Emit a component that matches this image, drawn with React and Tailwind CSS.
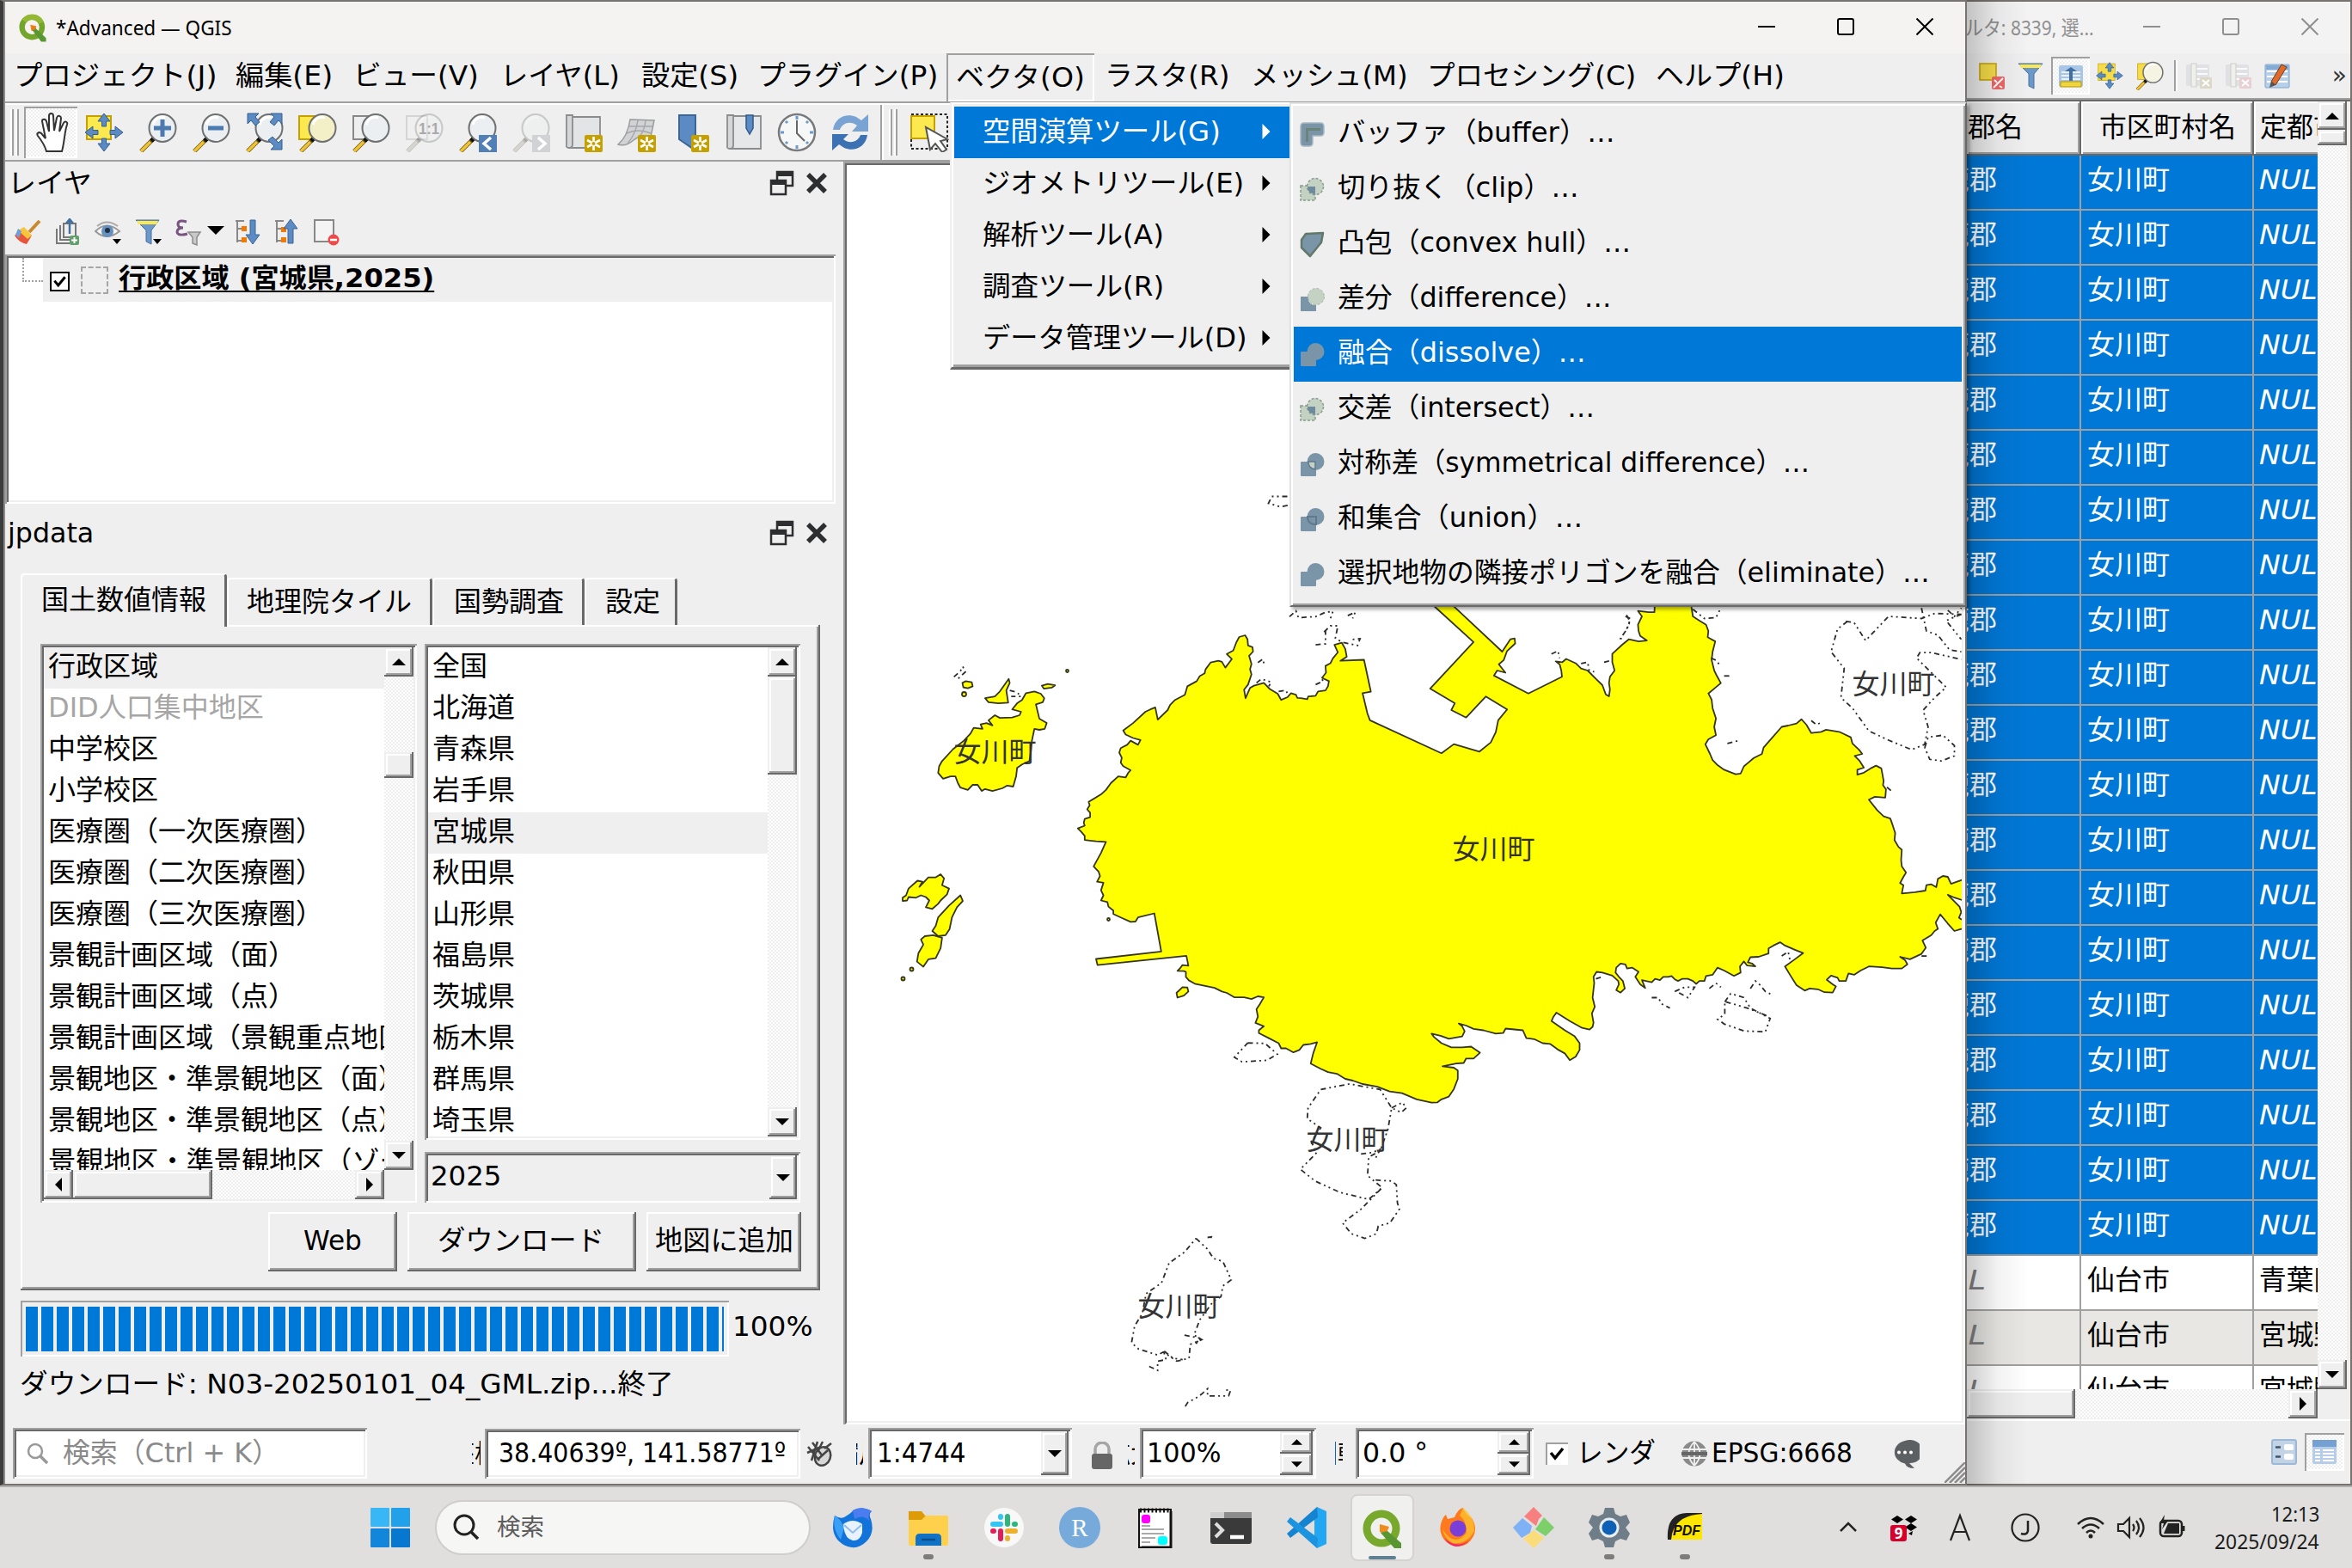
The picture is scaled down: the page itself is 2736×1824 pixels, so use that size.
import React, { useLayoutEffect, useRef, useState } from "react";

/* ---------- shared bevel styles ---------- */
const raised =
  "bg-[#efefef] shadow-[inset_-2px_-2px_0_#696969,inset_2px_2px_0_#ffffff,inset_-4px_-4px_0_#a0a0a0]";
const raisedScroll =
  "bg-[#efefef] shadow-[inset_-2px_-2px_0_#696969,inset_2px_2px_0_#efefef,inset_-4px_-4px_0_#a0a0a0,inset_4px_4px_0_#ffffff]";
const sunken =
  "p-[4px] shadow-[inset_2px_2px_0_#a0a0a0,inset_-2px_-2px_0_#ffffff,inset_4px_4px_0_#696969,inset_-4px_-4px_0_#efefef]";
const thinSunken = "shadow-[inset_2px_2px_0_#a0a0a0,inset_-2px_-2px_0_#ffffff]";
const dither =
  "bg-[repeating-conic-gradient(#ffffff_0%_25%,#efefef_0%_50%)] bg-[length:4px_4px]";

/* Text condensed or widened to a given width. */
function T({ w, children, className = "" }) {
  const ref = useRef(null);
  const [scale, setScale] = useState(1);
  useLayoutEffect(() => {
    if (w && ref.current) setScale(w / ref.current.offsetWidth);
  }, [w]);
  return (
    <div className={"shrink-0 " + className} style={w ? { width: w } : undefined}>
      <div
        ref={ref}
        className="w-max origin-left whitespace-nowrap"
        style={{ transform: `scaleX(${scale})` }}
      >
        {children}
      </div>
    </div>
  );
}

function Tri({ dir, size = 12, color = "#000" }) {
  const d = {
    up: "M0 9 6 3 12 9Z",
    down: "M0 3 12 3 6 9Z",
    left: "M9 0 9 12 3 6Z",
    right: "M3 0 9 6 3 12Z",
  }[dir];
  return (
    <svg width={size} height={size} viewBox="0 0 12 12" className="block">
      <path d={d} fill={color} />
    </svg>
  );
}

function ScrollBtn({ dir, className }) {
  return (
    <div className={"flex shrink-0 items-center justify-center " + raisedScroll + " " + className}>
      <Tri dir={dir} size={16} />
    </div>
  );
}

/* ---------- toolbar icons ---------- */
function Svg({ s = 46, box = 46, children, className = "" }) {
  return (
    <svg width={s} height={s} viewBox={`0 0 ${box} ${box}`} className={"block shrink-0 " + className} fill="none">
      {children}
    </svg>
  );
}

function Lens({ fill = "#eceff1", faded }) {
  return (
    <g opacity={faded ? 0.3 : 1}>
      <path d="M19 30 4 45" stroke="#6b5a1a" strokeWidth="5" />
      <path d="M15 34 4 45" stroke={faded ? "#999" : "#f2c230"} strokeWidth="3.4" />
      <path d="M21 28 16 33" stroke="#111" strokeWidth="5" />
      <ellipse cx="29" cy="18" rx="15.5" ry="16" fill={fill} stroke="#6e7072" strokeWidth="2" />
      <path d="M18 14c2-7 8-10 14-8" stroke="#fff" strokeWidth="3" />
    </g>
  );
}

function MoveArrows() {
  return (
    <g fill="#5b8bc2" stroke="#33608f" strokeWidth="1">
      <path d="M23 1 30 10H25.500V16H20.500V10H16Z" />
      <path d="M23 45 30 36H25.500V30H20.500V36H16Z" />
      <path d="M1 23 10 16V20.500H16V25.500H10V30Z" />
      <path d="M45 23 36 16V20.500H30V25.500H36V30Z" />
    </g>
  );
}

function GoldStar() {
  return (
    <g>
      <rect x="24" y="26" width="21" height="20" rx="2" fill="#c4a000" />
      <path d="M34.500 28V44M27 32 42 40M42 32 27 40" stroke="#fff" strokeWidth="2.600" />
      <circle cx="34.500" cy="36" r="2" fill="#c4a000" />
    </g>
  );
}

const toolbarIcons = {
  hand: (
    <path
      transform="translate(4,0)"
      d="M14 45C12 38 8 32 4 27c-2-3 1-5 4-3l5 6L9 10c0-3 4-3 5 0l3 12L17 4c0-4 5-4 5 0l1 17L26 6c1-3 5-3 5 1l-2 15 5-10c2-3 5-1 4 2-3 8-3 21-6 31Z"
      fill="#fff"
      stroke="#333"
      strokeWidth="2"
    />
  ),
  pan: (
    <g>
      <rect x="3" y="4" width="28" height="27" fill="#fce94f" stroke="#c4a000" strokeWidth="2" />
      <MoveArrows />
    </g>
  ),
  zin: (
    <g>
      <Lens />
      <path d="M29 8V28M19 18H39" stroke="#4a7ab0" strokeWidth="5" />
    </g>
  ),
  zout: (
    <g>
      <Lens />
      <path d="M20 18H38" stroke="#4a7ab0" strokeWidth="5" />
    </g>
  ),
  full: (
    <g>
      <Lens />
      <g fill="#5b8bc2" stroke="#33608f">
        <path d="M4 1H17L13 5 18 11 13 15 8 9 4 13Z" />
        <path d="M44 1H31L35 5 30 11 35 15 40 9 44 13Z" />
        <path d="M44 43H31L35 39 28 32 33 28 40 35 44 31Z" />
      </g>
    </g>
  ),
  zsel: (
    <g>
      <rect x="2" y="4" width="24" height="27" fill="#fce94f" stroke="#c4a000" strokeWidth="2" />
      <Lens fill="#f3efc6" />
    </g>
  ),
  zlay: (
    <g>
      <rect x="3" y="4" width="24" height="27" fill="#eee" stroke="#888" strokeWidth="2" />
      <Lens />
    </g>
  ),
  znat: (
    <g>
      <g opacity=".5">
        <rect x="3" y="4" width="24" height="27" stroke="#bbb" strokeWidth="2" />
      </g>
      <Lens faded />
      <text x="29" y="25" fontSize="18" textAnchor="middle" fill="#aaa" fontWeight="bold" fontFamily="Liberation Sans, sans-serif" textLength="24" lengthAdjust="spacingAndGlyphs">
        1:1
      </text>
    </g>
  ),
  zprev: (
    <g>
      <Lens />
      <rect x="25" y="26" width="21" height="20" fill="#5080b5" />
      <path d="M39 29 31 36 39 43" stroke="#fff" strokeWidth="3.500" />
    </g>
  ),
  znext: (
    <g>
      <Lens faded />
      <rect x="25" y="26" width="21" height="20" fill="#d0d2d4" />
      <path d="M32 29 40 36 32 43" stroke="#fff" strokeWidth="3.500" />
    </g>
  ),
  newmap: (
    <g>
      <path d="M10 5H42V41H6" fill="#e3e4e5" stroke="#8a8c8e" strokeWidth="1.800" />
      <path d="M3 3h7v34q0 4-4 4t-3-4Z" fill="#d4d6d8" stroke="#8a8c8e" strokeWidth="1.800" />
      <GoldStar />
    </g>
  ),
  new3d: (
    <g>
      <path d="M15 8 43 9 38 33Q28 24 19 32 10 40 1 37 12 28 15 8Z" fill="#d2d3d4" stroke="#9a9c9e" strokeWidth="1.500" />
      <path d="M24 9Q22 24 12 36M33 9Q32 20 26 28M14 16H41M11 24Q24 18 39 24" stroke="#a5a7a9" strokeWidth="1.500" />
      <GoldStar />
    </g>
  ),
  bmnew: (
    <g>
      <path d="M10 3H29V44L10 31Z" fill="#5b8bc2" stroke="#3a6598" strokeWidth="2" />
      <GoldStar />
    </g>
  ),
  bms: (
    <g>
      <path d="M11 4H43V42H7" fill="#e6e7e8" stroke="#8a8c8e" strokeWidth="1.800" />
      <path d="M4 3h7v35q0 4-4 4t-3-4Z" fill="#d4d6d8" stroke="#8a8c8e" strokeWidth="1.800" />
      <path d="M26 3H34V18L30 25 26 18Z" fill="#5b8bc2" stroke="#2f5b8c" strokeWidth="1.500" />
    </g>
  ),
  clock: (
    <g>
      <circle cx="23" cy="23" r="21" fill="#f6f7f7" stroke="#77797b" strokeWidth="2.500" />
      <g stroke="#6a9bd0" strokeWidth="3">
        <path d="M23 4V8M23 38V42M4 23H8M38 23H42M10 10l2 2M36 10l-2 2M10 36l2-2M36 36l-2-2" />
      </g>
      <path d="M23 9V24L32 33" stroke="#666" strokeWidth="2" />
    </g>
  ),
  refresh: (
    <g fill="#4f83c0">
      <path d="M3 20C5 6 18 0 30 5L36 9 44 2V22H25L31 15C23 9 14 12 11 20Z" fill="#79a3d3" />
      <path d="M43 26C41 40 28 46 16 41L10 37 2 44V25H21L15 31C23 37 32 34 35 26Z" fill="#3c72b3" />
    </g>
  ),
};
const toolbarOrder = [
  "hand", "pan", "zin", "zout", "full", "zsel", "zlay", "znat",
  "zprev", "znext", "newmap", "new3d", "bmnew", "bms", "clock", "refresh",
];

function QLogo({ s }) {
  return (
    <Svg s={s} box={48}>
      <circle cx="23" cy="22" r="16.500" stroke="#74a52b" strokeWidth="9" />
      <path d="M10 12A16.500 16.500 0 0 1 38 15" stroke="#93b831" strokeWidth="9" />
      <path d="M20 18 30 20 28 29 22 28Z" fill="#f08c1e" />
      <path d="M22 25 29 24 46 40V46H38Z" fill="#589632" />
      <path d="M23 19 29 22 27 27 22 26Z" fill="#ee7913" />
    </Svg>
  );
}

/* ---------- main window: title, menu bar, toolbar ---------- */
function WinButtons({ color, gap, className }) {
  return (
    <div className={"flex items-center " + gap + " " + className}>
      <svg width="20" height="20" viewBox="0 0 20 20" fill="none" stroke={color} strokeWidth="2"><path d="M0 10H20" /></svg>
      <svg width="20" height="20" viewBox="0 0 20 20" fill="none" stroke={color} strokeWidth="2"><rect x="1" y="1" width="18" height="18" rx="2" /></svg>
      <svg width="20" height="20" viewBox="0 0 20 20" fill="none" stroke={color} strokeWidth="2"><path d="M.5.5 19.500 19.500M19.500.5.5 19.500" /></svg>
    </div>
  );
}

const menus = [
  ["プロジェクト(J)", 10, 236],
  ["編集(E)", 22, 113],
  ["ビュー(V)", 24, 146],
  ["レイヤ(L)", 25, 139],
  ["設定(S)", 25, 113],
  ["プラグイン(P)", 22, 210],
  ["ベクタ(O)", 10, 172, true],
  ["ラスタ(R)", 12, 146],
  ["メッシュ(M)", 24, 183],
  ["プロセシング(C)", 22, 243],
  ["ヘルプ(H)", 23, 150],
];

function MenuBar() {
  return (
    <div className="flex h-[56px] items-center">
      {menus.map(([t, gap, w, open]) =>
        open ? (
          <div
            key={t}
            style={{ marginLeft: gap, width: w }}
            className={"flex h-[56px] shrink-0 items-center justify-center pb-1 pt-1 " + thinSunken}
          >
            <T w={150}>{t}</T>
          </div>
        ) : (
          <div key={t} style={{ marginLeft: gap }} className="shrink-0 pb-[4px]">
            <T w={w}>{t}</T>
          </div>
        )
      )}
    </div>
  );
}

function Grip() {
  return (
    <div className="flex h-[54px] gap-[2px]">
      <div className="w-[4px] border-r-2 border-[#a0a0a0] bg-white" />
      <div className="w-[4px] border-r-2 border-[#a0a0a0] bg-white" />
    </div>
  );
}

function ToolBar() {
  return (
    <div className="flex h-[70px] items-center border-b-2 border-t-2 border-b-[#a0a0a0] border-t-[#a0a0a0] pt-[2px] shadow-[inset_0_2px_0_#fff]">
      <div className="ml-[6px] mr-[6px]"><Grip /></div>
      {toolbarOrder.map((k) => (
        <div
          key={k}
          className={
            "flex h-[60px] w-[62px] shrink-0 items-center justify-center " +
            (k === "hand" ? dither + " " + thinSunken : "")
          }
        >
          <Svg s={46}>{toolbarIcons[k]}</Svg>
        </div>
      ))}
      <div className="ml-[4px] h-full w-[4px] border-l-2 border-[#a0a0a0] bg-white" />
      <div className="ml-[6px] mr-[14px]"><Grip /></div>
      <Svg s={46}>
        <rect x="2" y="2" width="42" height="40" stroke="#222" strokeWidth="2" strokeDasharray="3 2.500" />
        <rect x="2" y="4" width="27" height="26" fill="#fce94f" stroke="#c4a000" strokeWidth="2" />
        <path d="M19 17 24 43 30 36 38 46 43 43 36 33 44 31Z" fill="#fff" stroke="#555" strokeWidth="2" />
      </Svg>
    </div>
  );
}

/* ---------- docks ---------- */
function DockTitle({ title, w, className }) {
  return (
    <div className={"flex items-center " + className}>
      <T w={w} className="ml-[3px]">{title}</T>
      <div className="ml-auto mr-[18px] flex items-center gap-[12px]">
        <Svg s={30} box={30}>
          <rect x="9" y="2" width="18" height="16" stroke="#2c2e30" strokeWidth="2.500" />
          <rect x="9" y="1" width="19" height="6" fill="#2c2e30" />
          <rect x="2" y="12" width="17" height="16" fill="#efefef" stroke="#2c2e30" strokeWidth="2.500" />
          <rect x="1" y="11" width="19" height="6" fill="#2c2e30" />
        </Svg>
        <Svg s={26} box={26}>
          <path d="M3 3 23 23M23 3 3 23" stroke="#2c2e30" strokeWidth="5.500" />
        </Svg>
      </div>
    </div>
  );
}

const layerIcons = [
  <g key="a">
    <path d="M30 3 18 16" stroke="#c98a2b" strokeWidth="4" />
    <path d="M10 12 21 20 15 30Q6 28 1 20Z" fill="#e8563a" />
    <path d="M5 14 12 10 21 20 16 24Z" fill="#f6c43d" />
    <path d="M2 19 5 12 9 15 6 23Z" fill="#6aa0dc" />
  </g>,
  <g key="b">
    <path d="M3 12V29H18M7 8V25H20" stroke="#777" strokeWidth="2" />
    <rect x="11" y="6" width="14" height="16" fill="#eee" stroke="#777" strokeWidth="2" />
    <path d="M18 1V18M14 6 18 1 22 6" stroke="#44709f" strokeWidth="2.500" />
    <rect x="18" y="20" width="11" height="11" rx="2" fill="#5f9f6a" />
    <path d="M23.500 22V29M20 25.500H27" stroke="#fff" strokeWidth="2" />
  </g>,
  <g key="c">
    <path d="M1 15Q14 2 29 15 14 27 1 15Z" fill="#f4f4f4" stroke="#999" strokeWidth="2" />
    <circle cx="15" cy="15" r="7" fill="#6690bd" />
    <circle cx="15" cy="14" r="3" fill="#1d2f42" />
    <path d="M3 9Q14 0 27 9" stroke="#aaa" strokeWidth="2" />
    <path d="M21 24H31L26 30Z" fill="#000" />
  </g>,
  <g key="d">
    <path d="M1 2H28L19 14V30L13 27V14Z" fill="#6b97c9" stroke="#49739f" />
    <path d="M2 3H27L25 7H4Z" fill="#fce94f" />
    <path d="M21 24H31L26 30Z" fill="#000" />
  </g>,
];

function LayerTools() {
  return (
    <div className="flex h-[58px] items-center pl-[10px] pt-[5px]">
      {layerIcons.map((ic, i) => (
        <div key={i} className="mr-[15px]"><Svg s={32} box={32}>{ic}</Svg></div>
      ))}
      <Svg s={32} box={32}>
        <path d="M13 4Q3 1 3 7 3 11 9 11 2 11 2 16 3 21 14 18" stroke="#7a5480" strokeWidth="3" />
        <path d="M15 16H29L25 22V31L20 29V22Z" fill="#c9c9c9" stroke="#8d8d8d" strokeWidth="1.500" />
      </Svg>
      <div className="mx-[5px] mb-1"><Tri dir="down" size={20} /></div>
      <div className="ml-[6px]">
        <Svg s={32} box={32}>
          <path d="M2 3H12M4 3V28M4 12H10M4 26H10" stroke="#888" strokeWidth="2" />
          <rect x="9" y="9" width="6" height="6" fill="#f57900" />
          <rect x="9" y="22" width="6" height="6" fill="#f57900" />
          <path d="M19 2H25V19H30L22 30 14 19H19Z" fill="#5b8bc2" stroke="#3a6598" />
        </Svg>
      </div>
      <div className="ml-[14px]">
        <Svg s={32} box={32}>
          <path d="M2 3H12M4 3V28M4 12H10M4 26H10" stroke="#888" strokeWidth="2" />
          <rect x="9" y="10" width="6" height="6" fill="#f57900" />
          <rect x="9" y="22" width="6" height="6" fill="#f57900" />
          <path d="M17 29H23V12H28L20 1 12 12H17Z" fill="#5b8bc2" stroke="#3a6598" />
        </Svg>
      </div>
      <div className="ml-[14px]">
        <Svg s={32} box={32}>
          <rect x="2" y="2" width="22" height="25" fill="#f4f4f4" stroke="#888" strokeWidth="2" />
          <circle cx="24" cy="25" r="6.500" fill="#ef4a4a" />
          <path d="M20 25H28" stroke="#fff" strokeWidth="2.500" />
        </Svg>
      </div>
    </div>
  );
}

function Check({ className = "" }) {
  return (
    <svg width="24" height="24" viewBox="0 0 24 24" fill="none" className={"block shrink-0 " + className}>
      <path d="M5 11 10 17 19 6" stroke="#000" strokeWidth="3.500" />
    </svg>
  );
}

function LayerTree() {
  return (
    <div className={"h-[290px] w-[966px] bg-white " + sunken}>
      <div className="flex h-[51px]">
        <div className="ml-[16px] h-[28px] w-[24px] shrink-0 border-b-2 border-l-2 border-dotted border-[#a0a0a0]" />
        <div className="flex flex-1 items-center bg-[#efefef] pl-[8px]">
          <div className="mt-[4px] border-2 border-black bg-white"><Check className="-m-[1px] size-[21px]" /></div>
          <div className="ml-[13px] h-[32px] w-[32px] border-2 border-dashed border-[#a5a5a5]" />
          <T w={367} className="mb-[4px] ml-[12px] text-[31px] font-bold underline decoration-2 underline-offset-4">
            行政区域 (宮城県,2025)
          </T>
        </div>
      </div>
    </div>
  );
}

const tabs = [
  ["国土数値情報", 192, "h-[62px] w-[240px] pl-[22px] pb-[2px] mb-[-2px] bg-[#efefef] relative"],
  ["地理院タイル", 192, "h-[55px] w-[239px] pl-[21px] pb-[2px]"],
  ["国勢調査", 128, "h-[55px] w-[177px] pl-[23px] pb-[2px]"],
  ["設定", 64, "h-[55px] w-[108px] pl-[22px] pb-[2px]"],
];

const datasets = [
  ["行政区域", 128],
  ["DID人口集中地区", 251],
  ["中学校区", 128],
  ["小学校区", 128],
  ["医療圏（一次医療圏）", 320],
  ["医療圏（二次医療圏）", 320],
  ["医療圏（三次医療圏）", 320],
  ["景観計画区域（面）", 288],
  ["景観計画区域（点）", 288],
  ["景観計画区域（景観重点地区）", 448],
  ["景観地区・準景観地区（面）", 416],
  ["景観地区・準景観地区（点）", 416],
  ["景観地区・準景観地区（ゾーン）", 480],
];
const prefectures = ["全国", "北海道", "青森県", "岩手県", "宮城県", "秋田県", "山形県", "福島県", "茨城県", "栃木県", "群馬県", "埼玉県"];

function DataLists() {
  return (
    <div className="ml-[23px] flex h-[650px] gap-[9px]">
      <div className={"flex w-[438px] flex-col bg-white " + sunken}>
        <div className="flex h-[608px]">
          <div className="w-[396px] overflow-hidden">
            {datasets.map(([t, w], i) => (
              <div
                key={t}
                className={
                  "flex h-[48px] items-center pb-[5px] pl-[5px] " +
                  (i === 0 ? "bg-[#efefef]" : i === 1 ? "text-[#a6a6a6]" : "")
                }
              >
                <T w={w}>{t}</T>
              </div>
            ))}
          </div>
          <div className={"flex w-[34px] flex-col " + dither}>
            <ScrollBtn dir="up" className="h-[34px]" />
            <div className={"mt-[88px] h-[30px] " + raisedScroll} />
            <ScrollBtn dir="down" className="mt-auto h-[34px]" />
          </div>
        </div>
        <div className="flex h-[34px] bg-[#efefef]">
          <div className={"flex w-[396px] " + dither}>
            <ScrollBtn dir="left" className="w-[34px]" />
            <div className={"w-[162px] " + raisedScroll} />
            <ScrollBtn dir="right" className="ml-auto w-[34px]" />
          </div>
        </div>
      </div>
      <div className="flex w-[437px] flex-col gap-[14px]">
        <div className={"flex h-[577px] bg-white " + sunken}>
          <div className="w-[395px] overflow-hidden">
            {prefectures.map((t) => (
              <div key={t} className={"flex h-[48px] items-center pb-[5px] pl-[5px] " + (t === "宮城県" ? "bg-[#efefef]" : "")}>
                <T w={t.length * 32}>{t}</T>
              </div>
            ))}
          </div>
          <div className={"flex w-[34px] flex-col " + dither}>
            <ScrollBtn dir="up" className="h-[34px]" />
            <div className={"h-[114px] " + raisedScroll} />
            <ScrollBtn dir="down" className="mt-auto h-[34px]" />
          </div>
        </div>
        <div className={"flex h-[59px] items-center " + sunken}>
          <T w={82} className="mb-[4px] ml-[3px]">2025</T>
          <ScrollBtn dir="down" className="ml-auto h-[51px] w-[32px]" />
        </div>
      </div>
    </div>
  );
}

function JpData() {
  return (
    <div>
      <div className="ml-[18px] mt-[11px] flex items-end">
        {tabs.map(([t, w, c]) => (
          <div key={t} className={"flex items-center rounded-t-[4px] border-l-2 border-r-[3px] border-t-2 border-l-white border-r-[#696969] border-t-white " + c}>
            <T w={w}>{t}</T>
          </div>
        ))}
      </div>
      <div className="ml-[18px] h-[774px] w-[930px] pt-[22px] shadow-[inset_-2px_-2px_0_#696969,inset_2px_2px_0_#fff,inset_-4px_-4px_0_#a0a0a0]">
        <DataLists />
        <div className="ml-[288px] mt-[11px] flex h-[69px] gap-[12px]">
          <div className={"flex w-[150px] items-center justify-center pb-1 " + raised}><T w={68}>Web</T></div>
          <div className={"flex w-[266px] items-center justify-center pb-1 pr-[2px] " + raised}><T w={194}>ダウンロード</T></div>
          <div className={"flex w-[180px] items-center justify-center pb-1 " + raised}><T w={161}>地図に追加</T></div>
        </div>
      </div>
      <div className="ml-[18px] mt-[12px] flex h-[65px] items-center">
        <div className={"flex h-[65px] w-[824px] items-center gap-[4px] overflow-hidden pl-[6px] pr-[6px] " + thinSunken}>
          {Array.from({ length: 45 }, (_, i) => (
            <div key={i} className="h-[52px] w-[14px] shrink-0 bg-[#0078d7]" />
          ))}
          <div className="h-[52px] w-[2px] shrink-0 bg-[#0078d7]" />
        </div>
        <T w={93} className="mb-[5px] ml-[4px]">100%</T>
      </div>
      <T w={761} className="ml-[17px] mt-[16px]">ダウンロード: N03-20250101_04_GML.zip...終了</T>
    </div>
  );
}

/* ---------- map ---------- */
/* Survey sheets: origin x, origin y, units per step in x and y. */
const sheets = {
  a: [1000, 700, 0.574, 0.3954],
  b: [1700, 560, 0.38265, 0.4847],
  c: [1240, 1100, 0.4464, 0.35714],
};
function pts(sheet, s) {
  const [ox, oy, sx, sy] = sheets[sheet];
  return s
    .split(" ")
    .map((p) => {
      const [x, y] = p.split(",").map(Number);
      return (ox + x * sx).toFixed(1) + "," + (oy + y * sy).toFixed(1);
    })
    .join(" ");
}

const mainland = [
  pts("a", "1162,10 1245,120 1157,257 1207,300 1200,320 1230,342 1270,280 1313,318 1295,350 1290,385 1280,415 1257,442 1205,420 1180,447 1035,350 1030,330 1020,270 1037,266 1023,172 975,175 988,163 985,140 978,122 963,128 970,150 960,168 955,182 945,190 946,210 938,225 952,235 950,250 945,262 930,265 925,278 910,280 908,288 895,285 888,284 885,275 875,270 868,282 855,290 848,272 840,265 832,258 820,240 800,248 792,255 783,285 780,260 788,245 795,215 792,200 795,185 790,160 798,148 797,135 788,130 787,112 782,100 770,105 764,122 758,145 745,155 755,170 742,195 735,178 728,175 712,180 702,200 700,212 690,220 684,235 665,250 660,275 640,290 630,305 625,320 605,348 600,312 590,318 580,325 555,358 535,380 540,392 555,402 570,408 565,422 550,410 543,422 530,432 527,445 532,460 530,475 535,485 550,497 545,505 540,518 525,515 510,535 500,555 490,568 465,590 467,600 462,612 468,622 468,635 457,640 455,652 457,660 443,668 450,678 457,690 457,702 480,706 500,708 490,740 475,780 485,795 488,808 482,825 495,828 490,850 495,865 490,880 503,885 505,898 515,910 515,920 530,930 550,943 560,942 565,930 598,918 612,1030 480,1052 483,1070 663,1043 667,1072 655,1070 650,1080 645,1087 658,1088 662,1090 662,1105 668,1115 680,1125 720,1137 735,1148 745,1152 760,1165 780,1165 795,1170 808,1162 820,1165 812,1185 805,1200 808,1222 803,1240 820,1250 810,1262 810,1270 830,1285 850,1300 855,1315 865,1315 880,1327 892,1320 900,1305 915,1302 928,1297 920,1330 915,1360 935,1375 950,1385 968,1390 985,1405 1000,1410 1020,1420 1050,1428 1075,1442 1100,1447 1130,1465 1160,1475 1172,1474 1180,1465 1195,1457 1205,1435 1213,1405 1213,1380 1205,1372 1182,1368 1210,1360 1225,1358 1230,1345 1245,1345 1258,1328 1240,1310 1222,1312 1200,1312 1180,1300 1165,1282 1160,1272 1178,1278 1195,1287 1222,1280 1227,1265 1222,1250 1215,1242 1230,1248 1245,1258 1265,1262 1290,1272 1305,1270 1310,1257 1345,1262 1352,1285 1368,1288 1385,1300 1400,1302 1415,1318 1430,1330 1440,1350 1452,1340 1460,1320 1460,1300 1450,1280 1430,1262 1403,1235 1407,1222 1413,1210 1440,1235 1465,1255 1480,1260"),
  pts("b", "400,1310 403,1300 398,1278 407,1262 400,1240 405,1205 403,1190 412,1178 430,1180 460,1187 478,1200 480,1208 472,1222 485,1228 498,1218 492,1200 480,1190 470,1180 472,1168 485,1158 500,1160 505,1170 520,1168 540,1178 530,1190 545,1208 560,1217 550,1198 580,1203 590,1195 605,1198 615,1190 630,1190 640,1188 650,1196 660,1200 672,1195 690,1195 705,1200 715,1207 725,1200 740,1200 745,1188 765,1185 780,1168 800,1175 830,1188 850,1180 848,1165 860,1153 870,1163 895,1165 885,1158 872,1155 880,1143 905,1142 935,1134 935,1122 950,1115 970,1107 985,1115 1000,1120 1015,1125 1040,1133 1015,1148 985,1165 1000,1185 1020,1210 1045,1223 1060,1218 1085,1220 1105,1227 1130,1228 1140,1213 1130,1208 1112,1197 1125,1187 1145,1192 1150,1200 1170,1200 1178,1182 1195,1185 1215,1175 1240,1165 1280,1167 1310,1170 1340,1170 1357,1160 1350,1150 1335,1142 1365,1148 1400,1135 1413,1120 1403,1103 1430,1090 1440,1080 1450,1075 1443,1060 1457,1040 1480,1062 1500,1080 1521,1075 1540,1078 1540,1050 1521,1052 1514,1048 1521,1035 1516,1022 1480,993 1500,1000 1540,1010 1540,955 1521,958 1490,967 1480,950 1465,948 1450,955 1445,975 1430,968 1415,970 1412,983 1380,987 1340,990 1345,970 1335,965 1345,950 1353,940 1340,925 1338,910 1340,885 1330,878 1318,862 1320,845 1312,825 1305,810 1285,805 1265,790 1240,765 1258,758 1290,760 1292,740 1283,730 1285,720 1278,690 1262,683 1245,690 1225,700 1205,705 1205,693 1225,688 1212,672 1197,660 1220,655 1210,645 1190,630 1185,615 1150,602 1110,597 1095,602 1065,605 1050,585 1035,572 1020,582 995,587 975,590 945,617 920,640 915,655 890,665 860,685 850,702 835,704 800,693 780,682 765,670 757,655 743,632 752,620 775,610 770,590 775,570 765,545 762,525 752,510 775,495 790,485 778,468 770,455 762,430 765,410 773,385 750,375 752,360 745,345 725,335 705,325 700,300 700,285 590,285 588,315 570,315 538,312 550,325 538,345 540,360 545,372 565,383 540,385 510,380 490,393 460,415 460,435 467,455 453,470 450,485 453,500 450,517 440,512 430,490 410,475 385,455 365,450 350,438 320,427 308,435 288,433 300,440 305,455 307,470 205,510 100,467 110,455 135,460 115,440 130,430 140,408 165,390 163,378 150,380 125,410"),
  pts("a", "1303,148 1205,15 1200,10"),
].join(" ");

const islets = [
  pts("a", "355,265 368,272 375,285 372,297 358,303 365,345 380,358 376,375 365,378 355,375 350,410 348,440 345,470 330,480 320,490 318,515 312,545 300,542 290,550 270,558 255,552 248,558 240,540 230,540 220,555 205,548 200,535 195,515 185,515 170,522 160,505 162,485 168,470 190,435 212,410 225,390 232,372 250,375 246,362 258,358 270,365 262,350 275,335 285,343 310,342 325,335 328,325 310,318 320,300 330,290 338,270"),
  pts("a", "255,285 275,280 285,265 303,228 305,240 298,262 302,298 282,300 262,297"),
  pts("a", "165,803 172,815 168,835 182,845 178,862 165,880 160,890 148,905 135,900 142,880 135,870 125,865 115,872 100,870 97,880 88,882 88,872 95,865 100,845 118,822 128,825 122,840 140,812 155,812"),
  pts("a", "205,865 210,882 198,900 188,930 183,965 175,982 160,985 148,970 155,955 160,930 182,895"),
  pts("a", "133,985 150,982 168,990 165,1020 155,1050 140,1053 130,1075 117,1060 120,1035 130,1010 125,995"),
  pts("a", "655,1135 665,1136 667,1148 658,1160 645,1166 643,1152"),
  pts("a", "209,240 216,235 228,238 230,250 220,256 211,253"),
  pts("a", "370,248 382,243 397,247 390,254 374,257"),
];

const reefs = [
  pts("c", "665,470 740,452 820,470 850,530 840,600 820,670 790,690 787,750 825,790 790,828 715,805 650,768 612,730 655,675 640,640 665,595 630,565 632,530 665,470"),
  pts("c", "808,765 850,768 862,780 865,840 870,860 845,905 815,915 810,940 780,955 745,940 722,905 770,860 825,790"),
  pts("c", "850,530 878,512 888,530 875,545 850,530"),
  pts("c", "340,955 370,990 385,1020 410,1030 432,1090 410,1110 405,1145 385,1160 350,1220 335,1270 355,1285 325,1300 322,1345 290,1355 255,1325 240,1335 190,1315 172,1295 180,1240 200,1200 210,1135 250,1100 270,1035 310,1000 340,955"),
  pts("c", "218,1372 240,1385 240,1355 262,1350 255,1320 280,1345 305,1350"),
  pts("c", "310,1270 330,1275 350,1280 340,1298 355,1275"),
  pts("c", "312,1502 318,1490 340,1475 355,1462 370,1445 370,1468 385,1468 425,1468 430,1450 410,1448"),
  pts("c", "475,318 520,320 552,355 525,375 460,380 440,365 475,318"),
  pts("c", "770,680 800,675 820,665 805,700"),
  pts("c", "370,952 380,950 378,958"),
  pts("b", "1170,337 1195,340 1230,383 1300,325 1400,330 1440,318 1521,320"),
  pts("b", "1175,337 1145,355 1125,410 1165,450 1155,520 1190,545 1240,600 1300,622 1370,645 1410,632 1420,590 1405,550 1440,520 1475,495 1430,460 1385,425 1395,412 1430,412 1521,428"),
  pts("b", "1400,305 1415,360 1450,370 1485,405 1521,410"),
  pts("b", "1410,640 1420,615 1465,610 1500,635 1500,660 1460,672 1425,668 1410,640"),
  pts("b", "1521,320 1475,335 1500,360 1521,380"),
  pts("b", "1480,310 1500,325 1521,305"),
  pts("b", "705,308 740,330 775,328 790,305"),
  pts("b", "500,325 515,330 505,355 485,378 495,380"),
  pts("b", "275,415 295,408 300,425"),
  pts("b", "365,438 385,435 390,455 405,458"),
  pts("b", "435,435 460,430"),
  pts("b", "760,425 775,430 785,440"),
  pts("b", "800,468 820,468"),
  pts("b", "810,630 850,622"),
  pts("b", "1065,575 1080,585 1100,578"),
  pts("b", "1295,735 1315,748"),
  pts("b", "802,1250 820,1230 860,1240 880,1265 940,1290 925,1322 860,1320 800,1303 780,1292 802,1280 802,1250"),
  pts("b", "805,1250 870,1265 935,1285"),
  pts("b", "580,1240 600,1240 610,1255 635,1265"),
  pts("b", "650,1225 680,1215 710,1215 690,1240 655,1225"),
  pts("b", "755,1218 775,1205 790,1215"),
  pts("b", "880,1218 895,1200 910,1210 925,1225 950,1235"),
  pts("b", "975,1140 995,1130 1000,1150"),
  pts("b", "410,1195 430,1190"),
  pts("b", "1400,1140 1420,1140"),
  pts("a", "872,45 885,28 890,48 925,45 945,32 960,30 955,50"),
  pts("a", "990,42 1005,32 1000,50"),
  pts("a", "942,90 955,72 970,72 965,108 978,120 1010,130 1015,110 1000,112"),
  pts("a", "925,128 945,125 945,85"),
  pts("a", "805,240 815,228 835,238 830,250"),
  pts("a", "850,265 865,262 870,280"),
  pts("a", "925,245 940,235 935,220"),
  pts("a", "808,180 818,170 820,182"),
  pts("a", "192,222 205,205 210,192 215,208 200,228"),
  pts("a", "305,262 320,268 328,280 308,280"),
  pts("a", "1555,40 1562,60 1555,82"),
];
const dots = [[1242, 781, 1.5], [1122, 808, 2.5], [1061, 1128, 2], [1051, 1139, 2], [1290, 1070, 1.5]];
const labels = [[1158, 874], [1738, 987], [2203, 795], [1568, 1325], [1372, 1519]];

function MapCanvas() {
  return (
    <div className="h-[1470px] w-[1305px] border-l-2 border-t-[3px] border-[#a0a0a0]">
      <div className="h-full border-b-2 border-l-2 border-r-2 border-t-2 border-b-white border-l-[#696969] border-r-white border-t-[#696969]">
        <div className="h-full border-b-2 border-r-2 border-[#efefef] bg-white">
          <svg className="block h-full w-full" viewBox="985.5 192.5 1297 1461" preserveAspectRatio="xMinYMin slice">
            <g fill="#ffff00" stroke="#35351c" strokeWidth="1.800" strokeLinejoin="round">
              <polygon points={mainland} />
              {islets.map((p, i) => <polygon key={i} points={p} />)}
              {dots.map(([x, y, r], i) => <circle key={i} cx={x} cy={y} r={r} />)}
            </g>
            <g fill="none" stroke="#2b2b2b" strokeWidth="1.800" strokeDasharray="6 4 2 4 2 4">
              {reefs.map((p, i) => <polyline key={i} points={p} />)}
              <polyline points="1498,578 1480,578 1476,586 1490,590 1500,588" />
            </g>
            <g fill="#333" fontSize="32" textAnchor="middle" fontFamily="'Noto Sans CJK JP', sans-serif">
              {labels.map(([x, y], i) => <text key={i} x={x} y={y + 12}>女川町</text>)}
            </g>
          </svg>
        </div>
      </div>
    </div>
  );
}

/* ---------- status bar ---------- */
function Spin({ value, w, className }) {
  return (
    <div className={"flex h-[59px] shrink-0 items-center bg-white " + sunken + " " + className}>
      <T w={w} className="mb-[2px] ml-[4px]">{value}</T>
      <div className="ml-auto flex h-full w-[38px] flex-col">
        <div className={"flex flex-1 items-center justify-center " + raisedScroll}><Tri dir="up" size={13} /></div>
        <div className={"flex flex-1 items-center justify-center " + raisedScroll}><Tri dir="down" size={13} /></div>
      </div>
    </div>
  );
}

/* A label squeezed so narrow that only the gap between its glyphs shows. */
function Sliver({ children, className }) {
  return (
    <div className={"h-[30px] shrink-0 overflow-hidden whitespace-nowrap text-[30px] leading-[30px] " + className}>
      <div className="-ml-[27px]">{children}</div>
    </div>
  );
}

function StatusBar() {
  return (
    <div className="flex h-[70px] items-center pb-[1px]">
      <div className={"ml-[9px] flex h-[59px] w-[412px] shrink-0 items-center bg-white text-[#8a8a8a] " + sunken}>
        <Svg s={26} box={26} className="ml-[12px]">
          <circle cx="10" cy="10" r="8" stroke="#999" strokeWidth="2.500" />
          <path d="M16 16 24 24" stroke="#999" strokeWidth="3.500" />
        </Svg>
        <T w={252} className="mb-[2px] ml-[16px]">検索（Ctrl + K）</T>
      </div>
      <Sliver className="ml-[122px] w-[10px]">座標</Sliver>
      <div className={"ml-[5px] flex h-[58px] w-[367px] shrink-0 items-center bg-white " + sunken}>
        <T w={334} className="mb-[2px] ml-[12px]">38.40639º, 141.58771º</T>
      </div>
      <Svg s={32} box={32} className="ml-[6px]">
        <g stroke="#444" strokeWidth="2.500">
          <ellipse cx="20" cy="19" rx="9" ry="11" fill="#d8d8d8" transform="rotate(20 20 19)" />
          <path d="M3 8 16 24M8 3 20 19M14 2 7 24M2 15 18 8M20 2 14 14M15 22 26 12M30 4 22 10" />
        </g>
      </Svg>
      <Sliver className="ml-[27px] w-[8px]">縮尺</Sliver>
      <div className={"ml-[6px] flex h-[59px] w-[237px] shrink-0 items-center bg-white " + sunken}>
        <T w={104} className="mb-[2px] ml-[6px]">1:4744</T>
        <ScrollBtn dir="down" className="ml-auto h-full w-[32px]" />
      </div>
      <Svg s={32} box={32} className="ml-[19px] mt-1">
        <path d="M8 16V9a8 8 0 0 1 16 0v7" stroke="#a5a5a5" strokeWidth="3.500" />
        <rect x="4" y="14" width="24" height="18" rx="3" fill="#666" />
      </Svg>
      <Sliver className="ml-[14px] w-[8px]">拡大</Sliver>
      <Spin value="100%" w={86} className="ml-[6px] w-[205px]" />
      <Sliver className="ml-[22px] w-[9px]">回転</Sliver>
      <Spin value="0.0 °" w={76} className="ml-[15px] w-[207px]" />
      <div className={"ml-[14px] h-[26px] w-[26px] shrink-0 bg-white " + thinSunken}><Check className="m-[1px]" /></div>
      <T w={92} className="mb-[2px] ml-[10px]">レンダ</T>
      <Svg s={32} box={32} className="ml-[29px]">
        <circle cx="16" cy="16" r="14.500" fill="#8a8a8a" />
        <path d="M16 2V30M2 11H30M2 21H30M16 2Q3 16 16 30M16 2Q29 16 16 30" stroke="#efefef" strokeWidth="1.800" />
        <path d="M1 16H31" stroke="#666" strokeWidth="4" />
      </Svg>
      <T w={164} className="mb-[2px] ml-[4px]">EPSG:6668</T>
      <Svg s={34} box={34} className="ml-[44px]">
        <path d="M17 2a15 13.500 0 1 1 5 26l6 6q-9 0-11-5.500A15 13.500 0 0 1 17 2Z" fill="#5d6062" />
        <g fill="#fff"><circle cx="10" cy="15.500" r="2" /><circle cx="17" cy="15.500" r="2" /><circle cx="24" cy="15.500" r="2" /></g>
      </Svg>
      <Svg s={24} box={24} className="ml-auto mt-auto">
        <path d="M0 24 24 0M6 24 24 6M12 24 24 12M18 24 24 18" stroke="#8d8d8d" strokeWidth="2.500" />
      </Svg>
    </div>
  );
}

/* ---------- vector menus ---------- */
const vectorMenu = [
  ["空間演算ツール(G)", 277],
  ["ジオメトリツール(E)", 304],
  ["解析ツール(A)", 211],
  ["調査ツール(R)", 211],
  ["データ管理ツール(D)", 308],
];

const B = "#7b95a8";
const G = "#c3d2c3";
const geoIcons = {
  buffer: (
    <g>
      <path d="M6 2H25Q29 2 29 6V13Q29 17 25 17H16V25Q16 29 12 29H6Q2 29 2 25V6Q2 2 6 2Z" fill="#7b95a8" stroke="#a9b8c4" strokeWidth="1.500" />
      <path d="M8 8H25V11H11V24H8Z" fill="#6c8377" />
    </g>
  ),
  clip: (
    <g strokeDasharray="3 2" stroke="#8a9b8a" strokeWidth="1.500">
      <rect x="2" y="11" width="17" height="17" fill={G} />
      <circle cx="19" cy="12" r="9.500" fill={G} />
      <path d="M10 12H19V21Q10 20 10 12Z" fill="#6d8a9f" stroke="none" />
    </g>
  ),
  hull: <path d="M8 3 28 2 26 13 13 29 3 19 3 10Z" fill="#7b95a8" stroke="#61786a" strokeWidth="2.500" strokeLinejoin="round" />,
  diff: (
    <g>
      <path d="M2 12H11Q10 22 20 22V29H2Z" fill={B} />
      <circle cx="20" cy="12" r="9.500" fill={G} stroke="#a5b5a5" strokeDasharray="3 2" />
    </g>
  ),
  dissolve: (
    <g fill={B}>
      <rect x="2" y="12" width="18" height="17" rx="1" />
      <circle cx="19.500" cy="12" r="10" />
    </g>
  ),
  sym: (
    <g fill={B}>
      <rect x="2" y="12" width="18" height="17" rx="1" />
      <circle cx="19.500" cy="12" r="10" />
      <path d="M11 12H19V21Q11 20 11 12Z" fill={G} stroke="#60798c" strokeWidth="1.500" />
    </g>
  ),
  union: (
    <g fill={B}>
      <rect x="2" y="12" width="18" height="17" rx="1" />
      <circle cx="19.500" cy="12" r="10" />
      <path d="M10 12H20V21Q10 21 10 12Z" stroke="#60798c" strokeWidth="2" />
    </g>
  ),
};
const geoMenu = [
  ["バッファ（buffer）…", 323, "buffer"],
  ["切り抜く（clip）…", 281, "clip"],
  ["凸包（convex hull）…", 341, "hull"],
  ["差分（difference）…", 319, "diff"],
  ["融合（dissolve）…", 289, "dissolve", true],
  ["交差（intersect）…", 299, "clip"],
  ["対称差（symmetrical difference）…", 549, "sym"],
  ["和集合（union）…", 285, "union"],
  ["選択地物の隣接ポリゴンを融合（eliminate）…", 689, "dissolve"],
];

function Menus() {
  return (
    <div className="absolute left-[1105px] top-[119px] flex items-start">
      <div className="h-[311px] w-[395px] border-b-[3px] border-l-2 border-b-[#696969] border-l-[#efefef] bg-[#efefef] pl-[3px] pt-[5px] shadow-[inset_2px_2px_0_#fff,inset_0_-3px_0_#a0a0a0]">
        {vectorMenu.map(([t, w], i) => (
          <div key={t} className={"flex h-[60px] items-center pb-[3px] pl-[33px] pr-[18px] " + (i === 0 ? "bg-[#0078d7] text-white" : "")}>
            <T w={w}>{t}</T>
            <div className="ml-auto"><Tri dir="right" size={18} color={i === 0 ? "#fff" : "#000"} /></div>
          </div>
        ))}
      </div>
      <div className="h-[587px] w-[788px] border-2 border-b-[#696969] border-l-[#e3e3e3] border-r-[#696969] border-t-[#e3e3e3] bg-[#efefef] pl-[3px] pr-[4px] pt-[3px] shadow-[inset_2px_2px_0_#fff,inset_-2px_-2px_0_#a0a0a0,3px_3px_4px_rgba(0,0,0,0.35)]">
        {geoMenu.map(([t, w, icon, on]) => (
          <div key={t} className={"flex h-[64px] items-center pl-[6px] " + (on ? "bg-[#0078d7] text-white" : "")}>
            <Svg s={31} box={31}>{geoIcons[icon]}</Svg>
            <T w={w} className="mb-[5px] ml-[14px]">{t}</T>
          </div>
        ))}
      </div>
    </div>
  );
}

function MainWindow() {
  return (
    <div className="h-[1730px] w-[2288px] shrink-0 border-b-[2px] border-b-[#b0b0b0]">
      <div className="relative h-[1728px] border-b-2 border-l-[4px] border-r-2 border-t-2 border-b-[#767370] border-l-[#3c3c3c] border-r-[#767370] border-t-[#767370] bg-[#efefef]">
        <div className="border-l-2 border-[#8c8c8c]">
          <div className="flex h-[60px] items-center bg-[#f4f3f1] pl-[15px] pt-[1px]">
            <QLogo s={34} />
            <T w={205} className="mb-[1px] ml-[10px] font-['Noto_Sans','Noto_Sans_CJK_JP',sans-serif] text-[24px]">*Advanced — QGIS</T>
            <WinButtons color="#000" gap="gap-[72px]" className="mb-[4px] ml-auto mr-[37px]" />
          </div>
          <MenuBar />
          <ToolBar />
          <div className="-mt-[1px] flex h-[1469px]">
            <div className="w-[975px]">
              <DockTitle title="レイヤ" w={98} className="h-[51px]" />
              <LayerTools />
              <LayerTree />
              <DockTitle title="jpdata" w={100} className="h-[70px] pb-[2px]" />
              <JpData />
            </div>
            <MapCanvas />
          </div>
          <StatusBar />
        </div>
      </div>
    </div>
  );
}

/* ---------- attribute table window ---------- */
function TableRow({ left, city, ward, wardW, tone, leftClass, wardClass, h = "h-[64px]" }) {
  return (
    <div className={"flex overflow-hidden border-b-2 border-[#a0a0a0] " + h + " " + tone}>
      <div className="flex h-[62px] w-[133px] shrink-0 items-center overflow-hidden border-r-2 border-[#a0a0a0] pb-[6px]">
        <T w={96} className={leftClass}>{left}</T>
      </div>
      <div className="flex h-[62px] w-[201px] shrink-0 items-center border-r-2 border-[#a0a0a0] pb-[6px] pl-[7px]">
        <T w={96}>{city}</T>
      </div>
      <div className={"flex h-[62px] w-[74px] items-center overflow-hidden pb-[6px] pl-[6px] " + (wardClass || "")}>
        <T w={wardW}>{ward}</T>
      </div>
    </div>
  );
}

const headerCell = "flex h-[63px] items-center pb-[3px] shadow-[inset_-2px_-2px_0_#696969,inset_2px_2px_0_#fff,inset_-4px_-4px_0_#a0a0a0]";

function TableTools() {
  return (
    <div className="flex h-[52px] items-center pb-[1px] pl-[13px]">
      <Svg s={32} box={32}>
        <rect x="2" y="2" width="19" height="19" fill="#f5dc48" stroke="#c4a000" strokeWidth="1.500" />
        <rect x="16" y="17" width="15" height="15" rx="2" fill="#e66" />
        <path d="M18 30 29 19M19 21l3 3M25 28l3 2" stroke="#fff" strokeWidth="2" />
      </Svg>
      <Svg s={32} box={32} className="ml-[13px]">
        <path d="M2 2H30L20 14V31L14 28V14Z" fill="#6b97c9" stroke="#49739f" />
        <path d="M3 3H29L27 7H5Z" fill="#fce94f" />
      </Svg>
      <div className={"ml-[8px] flex h-[44px] w-[45px] items-center justify-center " + dither + " " + thinSunken}>
        <Svg s={30} box={30}>
          <rect x="1" y="3" width="28" height="25" rx="2" fill="#a9c6e6" />
          <path d="M4 11H26M4 15H26M4 19H26" stroke="#fff" strokeWidth="1.500" />
          <rect x="3" y="22" width="24" height="6" fill="#f0d53c" stroke="#b59500" />
          <path d="M15 5 22 10H17V21H13V10H8Z" fill="#3f6fa5" />
        </Svg>
      </div>
      <Svg s={32} className="ml-[7px]">
        <rect x="4" y="3" width="28" height="28" fill="#f5dc48" stroke="#c4a000" />
        <MoveArrows />
      </Svg>
      <Svg s={34} className="ml-[13px]">
        <rect x="5" y="4" width="20" height="25" fill="#f5dc48" stroke="#c4a000" />
        <Lens fill="#f5f3e2" />
      </Svg>
      <div className="ml-[12px] h-[36px] w-[4px] border-l-2 border-[#a0a0a0] bg-white" />
      {["#dcd8c8", "#e8cfd2"].map((c, i) => (
        <Svg key={c} s={32} box={32} className={i ? "ml-[14px]" : "ml-[9px]"}>
          <rect x="1" y="3" width="27" height="25" rx="2" fill="#dfe1e4" />
          <path d="M13 8H26M13 14H26M13 20H20" stroke="#fafafa" strokeWidth="2" />
          <rect x="7" y="2" width="6" height="27" fill="#efefec" stroke="#cfcfc8" />
          <rect x="17" y="18" width="14" height="13" rx="1" fill={c} />
          <path d="M20 21 28 28M28 21 20 28" stroke="#fff" strokeWidth="2" />
        </Svg>
      ))}
      <Svg s={32} box={32} className="ml-[14px]">
        <rect x="1" y="3" width="28" height="27" rx="1" fill="#b8cfe8" stroke="#7fa6d0" />
        <path d="M3 11H27M3 17H27M3 23H27" stroke="#fff" strokeWidth="2" />
        <rect x="2" y="4" width="26" height="5" fill="#84abd6" />
        <path d="M8 23 20 3 26 6 13 27Z" fill="#de6a2c" stroke="#6e3a18" />
        <path d="M8 22 6 30 13 27Z" fill="#555" />
      </Svg>
      <T className="ml-auto mr-[4px] text-[28px] text-[#333]">»</T>
    </div>
  );
}

function TableWindow() {
  return (
    <div className="relative h-[1730px] w-[448px] overflow-hidden border-b-2 border-[#b0b0b0]">
      <div className="h-[1728px] border-b-2 border-r-2 border-t-2 border-[#767370] bg-[#efefef]">
        <div className="flex h-[60px] items-center bg-[#f3f3f3] text-[#909090]">
          <T w={150} className="-ml-[2px] font-['Noto_Sans','Noto_Sans_CJK_JP',sans-serif] text-[24px]">ルタ: 8339, 選...</T>
          <WinButtons color="#8f8f8f" gap="gap-[72px]" className="mb-[3px] ml-auto mr-[37px]" />
        </div>
        <TableTools />
        <div className="h-[1539px] border-b-2 border-t-2 border-b-white border-t-[#a0a0a0]">
          <div className="flex h-[1500px] border-t-2 border-[#696969]">
            <div className="w-[408px] overflow-hidden">
              <div className="flex overflow-hidden">
                <div className={"w-[133px] shrink-0 " + headerCell}><T w={64} className="ml-[1px]">郡名</T></div>
                <div className={"w-[201px] shrink-0 pl-[21px] " + headerCell}><T w={159}>市区町村名</T></div>
                <div className={"w-[120px] shrink-0 pl-[7px] " + headerCell}><T w={93}>定都市</T></div>
              </div>
              {Array.from({ length: 20 }, (_, i) => (
                <TableRow key={i} left="牡鹿郡" city="女川町" ward="NULL" wardW={86} tone="bg-[#0078d7] text-white" leftClass="-ml-[61px]" wardClass="italic" />
              ))}
              {[["青葉区", "bg-white"], ["宮城野", "bg-[#e8e7e3]"], ["宮城野", "bg-white"]].map(([w, tone], i) => (
                <TableRow key={i} left="NULL" city="仙台市" ward={w} wardW={95} tone={tone} leftClass="-ml-[74px] italic text-[#808080]" />
              ))}
            </div>
            <div className={"flex w-[34px] flex-col " + dither}>
              <ScrollBtn dir="up" className="h-[33px]" />
              <div className={"h-[18px] shrink-0 " + raisedScroll} />
              <ScrollBtn dir="down" className="mt-auto h-[34px]" />
            </div>
          </div>
          <div className="flex h-[34px]">
            <div className={"flex w-[408px] " + dither}>
              <div className={"w-[126px] " + raisedScroll} />
              <ScrollBtn dir="right" className="ml-auto w-[34px]" />
            </div>
          </div>
        </div>
        <div className="flex h-[72px] items-center justify-end gap-[9px] pr-[7px]">
          <Svg s={30} box={30}>
            <rect x="1" y="1" width="28" height="28" rx="2" fill="#c3d3e6" stroke="#9db8d6" strokeWidth="2" />
            <rect x="15" y="6" width="11" height="7" rx="2" fill="#fff" />
            <rect x="15" y="17" width="11" height="7" rx="2" fill="#fff" />
            <path d="M5 9.500H11M5 20.500H11" stroke="#3d5570" strokeWidth="2.500" />
          </Svg>
          <div className={"flex h-[44px] w-[46px] items-center justify-center " + dither + " " + thinSunken}>
            <Svg s={30} box={30}>
              <rect x="1" y="1" width="28" height="28" rx="2" fill="#b5cde8" />
              <rect x="1" y="1" width="28" height="8" fill="#74a1d2" />
              <path d="M4 13H10M13 13H26M4 17H10M13 17H26M4 21H10M13 21H26M4 25H10M13 25H26" stroke="#fff" strokeWidth="2" />
            </Svg>
          </div>
        </div>
      </div>
      <div className="pointer-events-none absolute left-0 top-0 h-[1730px] w-[72px] bg-gradient-to-r from-black/20 via-black/5 to-transparent" />
    </div>
  );
}

/* ---------- taskbar ---------- */
const apps = [
  ["mail", <g key="i"><path d="M3 10Q9 14 14 12 24 6 24 4 34-2 46 5 42 8 45 14 50 30 40 40 30 50 18 46 2 40 1 24 1 16 3 10Z" fill="#1273db" /><path d="M24 4Q34-2 46 5 41 8 43 16 36 8 26 14Z" fill="#4b7cf0" /><path d="M3 10Q10 14 14 24L10 38Q0 26 3 10Z" fill="#3aa0f5" /><path d="M13 20Q24 12 35 20V30Q32 40 24 39 14 37 13 20Z" fill="#e8f3ff" /><path d="M14 21 24 30 34 21" stroke="#8fbdee" strokeWidth="2" /></g>],
  ["files", <g key="i"><path d="M1 5H16L20 10H45V24H1Z" fill="#dd9b08" /><path d="M1 15H16L21 10H45Q47 10 47 12V43Q47 45 45 45H3Q1 45 1 43Z" fill="#ffd04c" /><path d="M9 45V36Q9 31 14 31H34Q39 31 39 36V45Z" fill="#1072c4" /><path d="M16 38H32" stroke="#0b4d8a" strokeWidth="2.500" /></g>, "dot"],
  ["slack", <g key="i"><circle cx="24" cy="24" r="23" fill="#f8f8f8" /><g strokeWidth="6" strokeLinecap="round"><path d="M20 11V12M11 20H20" stroke="#36c5f0" /><path d="M28 11V20M37 20H36" stroke="#2eb67d" /><path d="M28 28H37M28 36V37" stroke="#ecb22e" /><path d="M20 28V37M11 28H12" stroke="#e01e5a" /></g></g>],
  ["r", <g key="i"><circle cx="24" cy="24" r="24" fill="#75aadb" /><text x="24" y="34" textAnchor="middle" fontSize="29" fill="#fff" fontFamily="'Liberation Serif', serif">R</text></g>],
  ["notes", <g key="i"><rect x="5" y="3" width="37" height="44" fill="#fff" stroke="#111" strokeWidth="2" /><path d="M42 5V47H8" stroke="#111" strokeWidth="3" /><path d="M6 4H42" stroke="#111" strokeWidth="5" strokeDasharray="2 2.500" /><rect x="8" y="9" width="10" height="10" rx="3" fill="#f0f" /><path d="M8 26H34M8 31H34M8 36H24M8 41H18M8 22H18" stroke="#aaa" strokeWidth="2" /><rect x="27" y="34" width="11" height="10" rx="3" fill="#0ff" /></g>],
  ["term", <g key="i"><rect y="6" width="48" height="37" rx="3" fill="#3a3a3a" /><path d="M0 6H48V13H0Z" fill="#8c8c8c" /><path d="M0 6H16V13H0Z" fill="#cfcfcf" /><path d="M6 19 14 27 6 35" stroke="#ddd" strokeWidth="4" /><path d="M23 35H39" stroke="#fff" strokeWidth="4.500" /></g>],
  ["code", <g key="i"><path d="M36 0 47 5V43L36 48 33 40V8Z" fill="#23a7f2" /><path d="M36 0 1 31 5 36 37 12Z" fill="#1583cf" /><path d="M36 48 1 17 5 12 37 36Z" fill="#1c93df" /></g>],
  ["qgis", <g key="i"><circle cx="23" cy="23" r="17" stroke="#79a92c" strokeWidth="9" /><path d="M21 18 32 21 28 30 21 27Z" fill="#f08c1e" /><path d="M22 28 30 26 46 40V46H38Z" fill="#589632" /></g>, "active"],
  ["fox", <g key="i"><path d="M24 46A21 21 0 0 1 4 20Q6 12 10 9L12 14 20 12Q24 2 30 1 32 8 40 13 47 24 42 34 36 46 24 46Z" fill="#ff7a1f" /><path d="M30 1Q44 12 43 28 34 44 18 42 8 36 6 26 20 48 34 30 34 16 26 10Z" fill="#ffc52e" opacity=".75" /><path d="M8 36Q22 50 38 38 30 46 22 46 12 44 8 36Z" fill="#f0256e" /><circle cx="24" cy="25" r="9.500" fill="#7a3fd8" /></g>],
  ["git", <g key="i"><path d="M24 0 34 10 30 14 27 22 13 11Z" fill="#f87f7f" /><path d="M36 12 48 24 38 34 26 26Z" fill="#7dcf6a" /><path d="M11 13 22 22 20 30 10 36 0 24Z" fill="#7fb1f7" /><path d="M24 27 36 36 24 48 12 37Z" fill="#fbdc7a" /></g>],
  ["gear", <g key="i"><path d="M19 1H29L31 8 37 11 44 9 48 18 43 24 48 31 44 39 37 37 31 40 29 47H19L17 40 11 37 4 39 0 31 5 24 0 18 4 9 11 11 17 8Z" fill="#6f7d89" /><circle cx="24" cy="24" r="11.500" fill="#e9eef2" /><circle cx="24" cy="24" r="8.500" fill="#0f61b5" /></g>, "dot"],
  ["pdf", <g key="i"><path d="M4 38Q2 8 26 7H44V38Z" fill="#222" /><path d="M8 38Q10 10 44 8V38Z" fill="#ffe600" /><text x="26" y="33" textAnchor="middle" fontSize="17" fontWeight="bold" fontStyle="italic" fill="#111" textLength="32" lengthAdjust="spacingAndGlyphs" fontFamily="'Liberation Sans', sans-serif">PDF</text></g>, "dot"],
];

function Taskbar() {
  return (
    <div className="flex h-[94px] items-center bg-[#e0dfdd] pb-[1px] pl-[431px] font-['Noto_Sans','Noto_Sans_CJK_JP',sans-serif]">
      <Svg s={46} box={46}>
        <g fill="#0f8ae0">
          <rect width="22" height="22" rx="1" fill="#38b6f5" />
          <rect x="24" width="22" height="22" rx="1" fill="#23a0ea" />
          <rect y="24" width="22" height="22" rx="1" fill="#1286da" />
          <rect x="24" y="24" width="22" height="22" rx="1" fill="#0877d0" />
        </g>
      </Svg>
      <div className="ml-[29px] flex h-[64px] w-[437px] items-center rounded-full border-2 border-[#cfcecc] bg-[#f6f6f5] pl-[19px]">
        <Svg s={31} box={31}>
          <circle cx="13" cy="13" r="11" stroke="#222" strokeWidth="3" />
          <path d="M21 21 29 29" stroke="#222" strokeWidth="3.500" />
        </Svg>
        <T w={55} className="mb-[2px] ml-[20px] text-[27px] text-[#5c5c5c]">検索</T>
      </div>
      <div className="ml-[5px] flex">
        {apps.map(([name, icon, state]) => (
          <div key={name} className="flex h-[94px] w-[88px] flex-col items-center justify-center">
            <div
              className={
                "flex h-[78px] w-[74px] flex-col items-center rounded-[8px] pt-[15px] " +
                (state === "active" ? "border-2 border-[#d4d3d1] bg-[#f0f0ef] pt-[13px]" : "")
              }
            >
              <Svg s={48} box={48}>{icon}</Svg>
              <div
                className={
                  "mt-[7px] h-[6px] rounded-full " +
                  (state === "active" ? "w-[32px] bg-[#5f7f93]" : state === "dot" ? "w-[12px] bg-[#7d7d7c]" : "w-0")
                }
              />
            </div>
          </div>
        ))}
      </div>
      <div className="ml-[135px] flex items-center">
        <Svg s={22} box={22}><path d="M2 15 11 6 20 15" stroke="#222" strokeWidth="2.500" /></Svg>
        <Svg s={34} box={34} className="ml-[37px]">
          <g fill="#000"><path d="M9 3 16 7.500 9 12 2 7.500ZM25 3 32 7.500 25 12 18 7.500ZM25 12 32 16.500 25 21 18 16.500ZM22 24 27 21 26 26Z" /></g>
          <rect x="1" y="14" width="19" height="19" rx="3" fill="#d6002a" />
          <text x="10.500" y="30" textAnchor="middle" fontSize="17" fontWeight="bold" fill="#fff" fontFamily="'Noto Sans', sans-serif">9</text>
        </Svg>
        <Svg s={34} box={34} className="ml-[31px]"><path d="M6 32 17 3 28 32M10 22H24" stroke="#222" strokeWidth="2.200" /></Svg>
        <Svg s={34} box={34} className="ml-[42px]"><circle cx="17" cy="17" r="15.500" stroke="#222" strokeWidth="2.200" /><path d="M20 9V21Q19 26 12 24" stroke="#222" strokeWidth="2.500" /></Svg>
        <Svg s={34} box={34} className="ml-[42px]">
          <path d="M2 13Q17-1 32 13M7 18Q17 9 27 18M12 23Q17 18 22 23" stroke="#222" strokeWidth="2.500" />
          <circle cx="17" cy="27" r="2.500" fill="#222" />
        </Svg>
        <Svg s={34} box={34} className="ml-[13px]">
          <path d="M2 13H8L15 6V28L8 21H2Z" stroke="#222" strokeWidth="2.200" />
          <path d="M19 13Q22 17 19 21M23 9Q29 17 23 25M27 6Q36 17 27 28" stroke="#222" strokeWidth="2.200" />
        </Svg>
        <Svg s={34} box={34} className="ml-[14px]">
          <rect x="3" y="9" width="25" height="18" rx="4" stroke="#222" strokeWidth="2.500" />
          <path d="M12 12H25V24H7Z" fill="#222" />
          <path d="M30 15V21" stroke="#222" strokeWidth="3" />
          <path d="M8 2 2 12H7L5 19 12 9H7Z" fill="#222" />
        </Svg>
        <div className="ml-[32px] flex w-[122px] flex-col items-end gap-[8px] text-[24px] text-[#1c1c1c]">
          <T w={56}>12:13</T>
          <T w={122}>2025/09/24</T>
        </div>
      </div>
    </div>
  );
}

export default function App() {
  return (
    <div className="relative h-[1824px] w-[2736px] overflow-hidden bg-[#e0dfdd] font-['DejaVu_Sans','Noto_Sans_CJK_JP',sans-serif] text-[32px] leading-none text-black">
      <div className="flex">
        <MainWindow />
        <TableWindow />
      </div>
      <Menus />
      <Taskbar />
    </div>
  );
}
